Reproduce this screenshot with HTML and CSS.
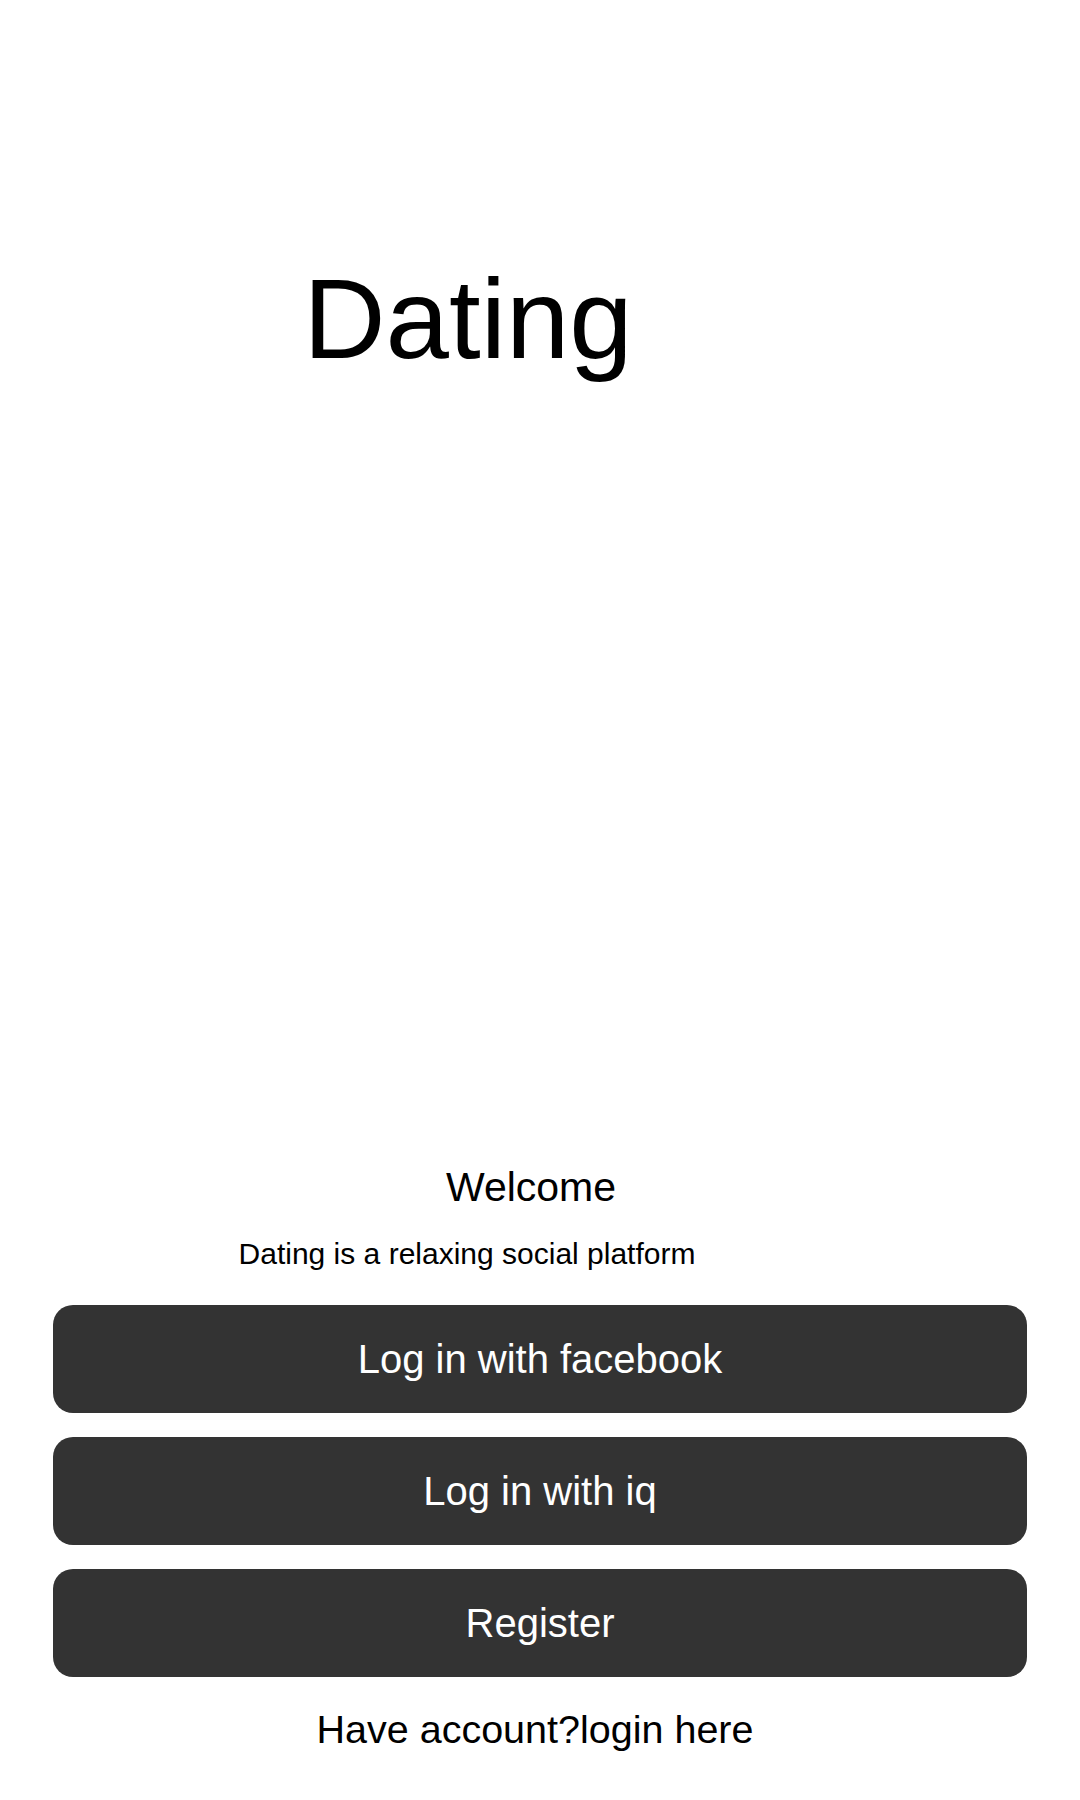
FILE: index.html
```html
<!DOCTYPE html>
<html lang="en">
<head>
<meta charset="utf-8">
<title>Dating</title>
<link rel="stylesheet" href="styles.css">
</head>
<body>
<main class="page">
  <header class="brand">
    <h1 class="brand-title">Dating</h1>
  </header>
  <section class="intro">
    <h2 class="welcome">Welcome</h2>
    <p class="tagline">Dating is a relaxing social platform</p>
    <div class="actions">
      <button class="btn">Log in with facebook</button>
      <button class="btn">Log in with iq</button>
      <button class="btn">Register</button>
    </div>
    <p class="login-link">Have account?login here</p>
  </section>
</main>
</body>
</html>
```
FILE: styles.css
```css
* { box-sizing: border-box; }
html, body { margin: 0; padding: 0; background: #ffffff; }
body {
  font-family: "Liberation Sans", Arial, sans-serif;
  color: #000;
}
.page {
  display: flex;
  flex-direction: column;
  min-height: 1800px;
}
.brand {
  padding-top: 262px;
  padding-right: 144px;
  text-align: center;
}
.brand-title {
  margin: 0;
  font-size: 114px;
  font-weight: normal;
  line-height: 1;
}
.intro {
  margin-top: auto;
  padding-bottom: 51px;
  display: flex;
  flex-direction: column;
}
.welcome {
  margin: 0;
  font-size: 41px;
  font-weight: normal;
  line-height: 40px;
  text-align: center;
  padding-right: 18px;
}
.tagline {
  margin: 32px 0 0;
  font-size: 30px;
  line-height: 1;
  text-align: center;
  padding-right: 146px;
}
.actions {
  margin: 36px 53px 0;
  display: flex;
  flex-direction: column;
  gap: 24px;
}
.btn {
  height: 108px;
  border: 0;
  border-radius: 20px;
  background: #333333;
  color: #ffffff;
  font-family: "Liberation Sans", Arial, sans-serif;
  font-size: 40px;
  line-height: 1;
  display: flex;
  align-items: center;
  justify-content: center;
  padding: 0;
}
.login-link {
  margin: 32px 0 0;
  font-size: 39.5px;
  line-height: 40px;
  text-align: center;
  padding-right: 10px;
}
```
